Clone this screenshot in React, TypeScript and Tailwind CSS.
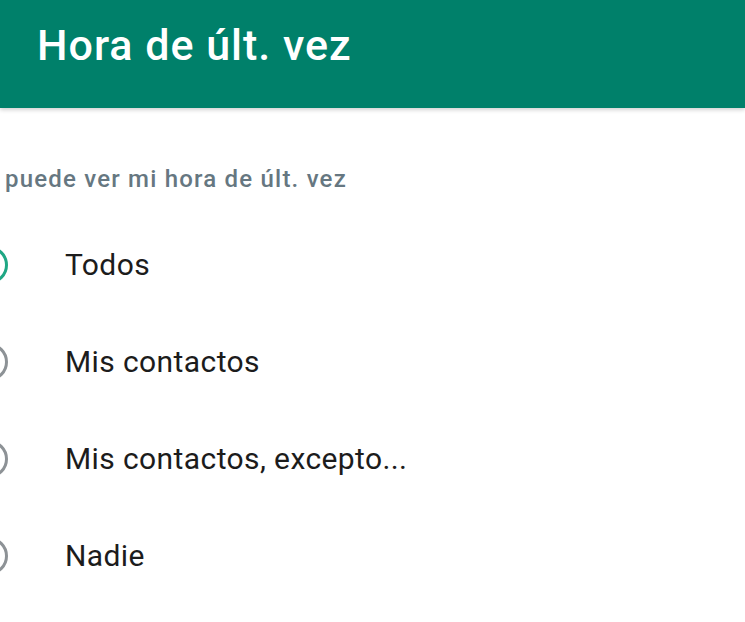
const options = [
  { label: "Todos", selected: true },
  { label: "Mis contactos", selected: false },
  { label: "Mis contactos, excepto...", selected: false },
  { label: "Nadie", selected: false },
];

function Radio({ selected }: { selected: boolean }) {
  return (
    <span
      className={
        selected
          ? "block w-[38px] h-[38px] shrink-0 rounded-full border-[3.5px] border-[#1fa784] -ml-[30px]"
          : "block w-[38px] h-[38px] shrink-0 rounded-full border-[3.5px] border-[#8d9296] -ml-[30px]"
      }
    />
  );
}

export default function App() {
  return (
    <div
      className="w-[745px] h-[622px] overflow-hidden bg-white"
      style={{ fontFamily: "Roboto, 'Liberation Sans', sans-serif" }}
    >
      <header className="h-[108px] bg-[#00806a] pl-[37px] pt-[19px] shadow-[0_2px_4px_rgba(0,0,0,0.18)] relative">
        <h1 className="text-[43px] leading-[52px] font-medium text-white tracking-[1px]">
          Hora de últ. vez
        </h1>
      </header>

      <section className="pt-[56px]">
        <p className="pl-[5px] text-[24px] leading-[30px] font-medium text-[#667781] tracking-[1.2px]">
          puede ver mi hora de últ. vez
        </p>
        <ul className="mt-[22px]">
          {options.map((o) => (
            <li key={o.label} className="flex items-center h-[97px]">
              <Radio selected={o.selected} />
              <span className="ml-[57px] text-[30px] text-[#1c1c1c] tracking-[0.4px]">{o.label}</span>
            </li>
          ))}
        </ul>
      </section>
    </div>
  );
}
